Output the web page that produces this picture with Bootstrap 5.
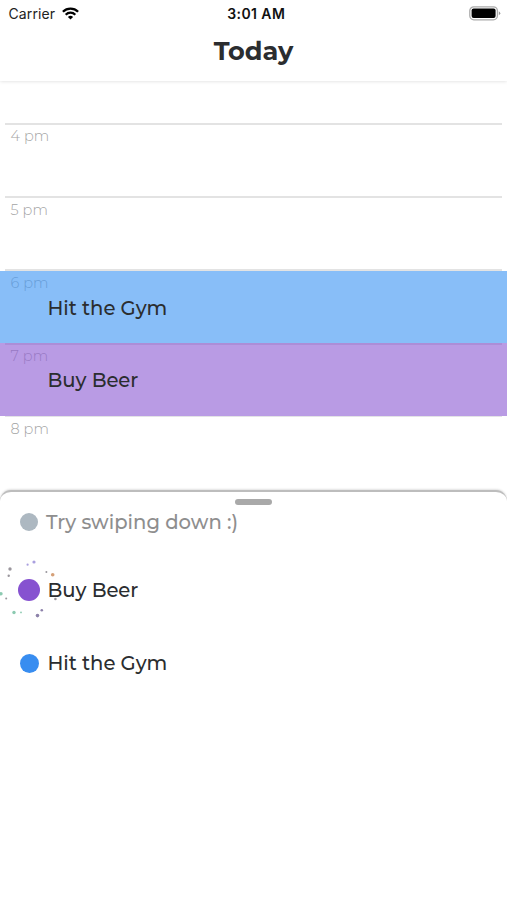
<!DOCTYPE html>
<html lang="en">
<head>
<meta charset="utf-8">
<meta name="viewport" content="width=device-width, initial-scale=1">
<title>Today</title>
<link href="https://cdn.jsdelivr.net/npm/bootstrap@5.3.0/dist/css/bootstrap.min.css" rel="stylesheet">
<style>
body{font-family:Montserrat,Inter,sans-serif;color:#2b2d2f;height:900px;overflow:hidden;background:#fff}
.top-bar{height:81px;box-shadow:0 0 4px rgba(0,0,0,.16);z-index:2}
.status{height:27px;padding:0 6px 0 8.5px;font:14px/27px Inter,sans-serif;color:#222}
.status>div{flex:1 1 0}
.carrier{letter-spacing:.1px}
.clock{font-weight:600;color:#111;letter-spacing:.4px;padding-left:3px}
.title{font-size:25.6px;line-height:32px;font-weight:700;margin:8px 0 0;letter-spacing:-.05px}
.wifi{margin-left:7px}
.timeline{height:409px;padding-top:42px}
.hour{height:73.2px;flex:none;position:relative}
.hour-rule{height:2px;background:#e3e3e3;margin:0 5px}
.hour-edge .hour-rule{background:#e3e3e6;height:1px;margin-bottom:1px}
.hour-label{font-size:14.5px;line-height:20px;font-weight:300;color:#a4a4a4;padding:1.4px 0 0 10.5px;letter-spacing:.1px}
.hour-busy .hour-label{color:#b8b8b8}
.event{position:absolute;inset:0;display:flex;align-items:center;padding:2px 0 0 47.5px;z-index:1}
.event-gym{background:rgba(30,132,242,.53);top:1.6px;bottom:-.8px}
.event-beer{background:rgba(122,67,204,.53);bottom:-.2px}
.task-text{font-size:19.6px;line-height:26px;font-weight:500;letter-spacing:-.04px}
.sheet{height:410px;border-top:2px solid #bdbdbd;border-radius:11px 11px 0 0;box-shadow:0 -1px 2px rgba(0,0,0,.12);z-index:2}
.grip{width:37px;height:6px;border-radius:3px;background:#a9a9a9;margin-top:7px}
.hint{padding-left:20px;height:34px;margin-bottom:34px}
.hint .task-text{color:#8e8e8e;margin-left:8px;letter-spacing:.01px}
.task{height:34px;padding-left:18px}
.task+.task{margin-top:39px}
.dot{width:22px;height:22px;border-radius:50%;flex:none}
.dot-hint{width:18px;height:18px;background:#adb8c1}
.dot-beer{background:#8652d0}
.dot-gym{width:19px;height:19px;margin:0 1.5px;background:#388df0}
.task .task-text{margin-left:7.5px}
.sparks{left:0;top:-14px}
</style>
<script src="https://cdn.jsdelivr.net/npm/bootstrap@5.3.0/dist/js/bootstrap.bundle.min.js"></script>
</head>
<body class="d-flex flex-column">
<header class="top-bar bg-white position-relative flex-shrink-0">
  <div class="status d-flex align-items-center">
    <div class="d-flex align-items-center"><span class="carrier">Carrier</span>
      <svg class="wifi" width="17" height="13" viewBox="0 0 17 13" aria-hidden="true"><g fill="none" stroke="#000" stroke-width="2.3"><path d="M.9 4.7a10.8 10.8 0 0 1 15.2 0"/><path d="M3.7 7.7a6.8 6.8 0 0 1 9.6 0"/></g><path d="M8.5 12.6 5.9 10a3.7 3.7 0 0 1 5.2 0z"/></svg>
    </div>
    <span class="clock">3:01 AM</span>
    <div class="d-flex justify-content-end">
      <svg width="32" height="15" viewBox="0 0 32 15" aria-hidden="true"><rect x=".8" y=".8" width="27.6" height="13" rx="4" fill="#fff" stroke="#aaa" stroke-width="1.3"/><rect x="2.6" y="2.6" width="24" height="9.4" rx="2"/><path d="M29.8 5.3q3 2 0 4z" fill="#999"/></svg>
    </div>
  </div>
  <h1 class="title text-center">Today</h1>
</header>
<main class="timeline d-flex flex-column overflow-hidden flex-shrink-0">
  <section class="hour"><div class="hour-rule"></div><div class="hour-label">4 pm</div></section>
  <section class="hour"><div class="hour-rule"></div><div class="hour-label">5 pm</div></section>
  <section class="hour hour-busy"><div class="hour-rule"></div><div class="hour-label">6 pm</div><div class="event event-gym"><span class="task-text">Hit the Gym</span></div></section>
  <section class="hour hour-busy"><div class="hour-rule"></div><div class="hour-label">7 pm</div><div class="event event-beer"><span class="task-text">Buy Beer</span></div></section>
  <section class="hour hour-edge"><div class="hour-rule"></div><div class="hour-label">8 pm</div></section>
</main>
<section class="sheet bg-white position-relative flex-shrink-0">
  <div class="grip mx-auto"></div>
  <div class="hint d-flex align-items-center"><span class="dot dot-hint"></span><span class="task-text">Try swiping down :)</span></div>
  <div class="task d-flex align-items-center position-relative">
    <svg class="sparks position-absolute" width="60" height="60" viewBox="0 559 60 60" aria-hidden="true">
      <g fill="#9a969d"><circle cx="10" cy="569" r="1.7"/><circle cx="8.7" cy="575.8" r="1.2"/><circle cx="46.4" cy="572" r="1"/><circle cx="55.4" cy="599" r="1.3"/><circle cx="6.2" cy="598.5" r="1"/></g>
      <g fill="#aaa0df"><circle cx="34" cy="562" r="1.6"/><circle cx="27.6" cy="564.7" r="1.1"/></g>
      <circle cx="52.7" cy="574.7" r="1.8" fill="#d5a078"/>
      <g fill="#8ccab1"><circle cx="1" cy="593.8" r="1.7"/><circle cx="14" cy="612.5" r="1.7"/><circle cx="21" cy="612.4" r=".9"/></g>
      <g fill="#8d82aa"><circle cx="37.5" cy="615.6" r="1.8"/><circle cx="41.8" cy="610.3" r="1.3"/></g>
    </svg>
    <span class="dot dot-beer"></span><span class="task-text">Buy Beer</span></div>
  <div class="task d-flex align-items-center"><span class="dot dot-gym"></span><span class="task-text">Hit the Gym</span></div>
</section>
</body>
</html>
